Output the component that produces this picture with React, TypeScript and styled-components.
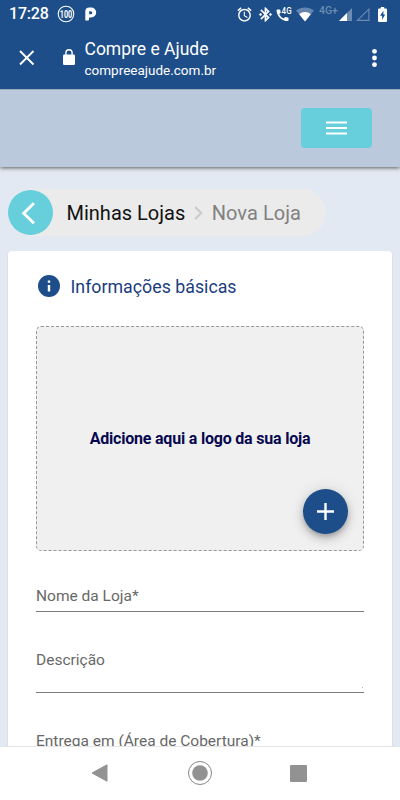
import React from 'react';
import styled, { createGlobalStyle } from 'styled-components';

const GlobalStyle = createGlobalStyle`
  * { box-sizing: border-box; }
  body { margin: 0; overflow: hidden; font-family: Roboto, sans-serif; }
  svg { display: block; flex: none; }
`;

const Screen = styled.div`
  width: 400px;
  height: 800px;
  display: flex;
  flex-direction: column;
  overflow: hidden;
  background: #e2e9f2;
`;

const BrowserChrome = styled.header`
  flex: none;
  height: 89px;
  background: #1d4e89;
  color: #fff;
`;

const StatusBar = styled.div`
  height: 28px;
  padding: 0 13px 0 9px;
  display: flex;
  align-items: center;
`;

const Clock = styled.span`
  width: 49px;
  font-size: 16px;
  font-weight: 500;
  line-height: 28px;
  letter-spacing: -0.2px;
`;

const StatusIcons = styled.div`
  margin-left: auto;
  display: flex;
  align-items: center;
`;

const StatusItem = styled.span<{ $gap?: number }>`
  display: block;
  margin-left: ${(p) => p.$gap ?? 0}px;
`;

const NetworkLabel = styled.span`
  margin: 0 1px 7px 5px;
  width: 19px;
  color: #6c8cb4;
  font-size: 10.5px;
  font-weight: 500;
  line-height: 10px;
  white-space: nowrap;
`;

const AddressBar = styled.div`
  height: 61px;
  padding: 0 23px 0 19px;
  display: flex;
  align-items: center;
`;

const IconNudge = styled.span`
  margin-bottom: 2px;
`;

const LockSlot = styled.span`
  margin: 0 0 3px 28px;
`;

const PageIdentity = styled.div`
  flex: 1;
  margin-left: 9.5px;
  padding-top: 1px;
`;

const PageTitle = styled.div`
  font-size: 17.5px;
  line-height: 22px;
`;

const PageHost = styled.div`
  font-size: 13.5px;
  line-height: 20px;
`;

const SiteBar = styled.div`
  flex: none;
  height: 78px;
  padding: 0 28px 2px;
  display: flex;
  align-items: center;
  justify-content: flex-end;
  background: #bbc9dc;
  border-top: 1px solid #9caabd;
  box-shadow: 0 1px 4px rgba(0, 0, 0, 0.6);
  clip-path: inset(0 0 -8px 0);
`;

const MenuButton = styled.button`
  width: 71px;
  height: 40px;
  padding: 1px 0 0;
  border: 0;
  border-radius: 4px;
  display: flex;
  align-items: center;
  justify-content: center;
  background: #67cfdc;
`;

const Content = styled.main`
  flex: 1;
  min-height: 0;
  overflow: hidden;
  padding: 22px 8px 0;
`;

const Breadcrumb = styled.nav`
  width: 318px;
  height: 47px;
  border-radius: 24px;
  display: flex;
  align-items: center;
  background: #ebebeb;
  font-size: 20px;
  line-height: 24px;
`;

const BackButton = styled.button`
  flex: none;
  width: 45px;
  height: 45px;
  margin-right: 13.5px;
  padding: 0 5px 0 0;
  border: 0;
  border-radius: 50%;
  display: flex;
  align-items: center;
  justify-content: center;
  background: #67cfdc;
`;

const Crumb = styled.span<{ $current?: boolean }>`
  color: ${(p) => (p.$current ? '#818181' : '#111')};
  letter-spacing: ${(p) => (p.$current ? 0.05 : 0)}px;
  white-space: nowrap;
`;

const CrumbDivider = styled.span`
  margin: 0 8.5px 0 9px;
`;

const Card = styled.section`
  margin-top: 15px;
  height: 600px;
  padding: 23px 28px 0;
  border-radius: 4px;
  background: #fff;
  box-shadow: 0 1px 2px rgba(0, 0, 0, 0.13);
`;

const CardHeading = styled.h2`
  margin: 0;
  height: 24px;
  padding-left: 2px;
  display: flex;
  align-items: center;
  gap: 10.5px;
  color: #1b3d7d;
  font-size: 17.8px;
  font-weight: 400;
`;

const LogoDrop = styled.div`
  position: relative;
  height: 225px;
  margin-top: 28px;
  border: 1px dashed #979797;
  border-radius: 5px;
  display: flex;
  align-items: center;
  justify-content: center;
  background: #f0f0f0;
  color: #06084f;
  font-size: 16px;
  font-weight: 700;
  letter-spacing: -0.2px;
`;

const AddButton = styled.button`
  position: absolute;
  right: 15px;
  bottom: 16px;
  width: 45px;
  height: 45px;
  padding: 0;
  border: 0;
  border-radius: 50%;
  display: flex;
  align-items: center;
  justify-content: center;
  background: #1d4e89;
  box-shadow: 0 3px 5px -1px rgba(0, 0, 0, 0.2), 0 5px 10px rgba(0, 0, 0, 0.16),
    0 1px 16px rgba(0, 0, 0, 0.12);
`;

const Field = styled.div<{ $top: number; $height: number }>`
  margin-top: ${(p) => p.$top}px;
  height: ${(p) => p.$height}px;
  display: flex;
  justify-content: space-between;
  border-bottom: 1px solid #7b7b7b;
`;

const FieldLabel = styled.label`
  color: #686868;
  font-size: 15.5px;
  line-height: 20px;
  white-space: nowrap;
`;

const ResizeGrip = styled.span`
  align-self: flex-end;
  width: 1px;
  height: 1px;
  margin: 0 1px 4px 0;
  background: #b5b5b5;
`;

const SystemNav = styled.footer`
  flex: none;
  height: 53px;
  padding: 0 93px 1px 91px;
  box-shadow: 0 -1px 0 #e6e6e6;
  display: flex;
  align-items: center;
  justify-content: space-between;
  background: #fff;
`;

const HundredIcon = () => (
  <svg width="18" height="18" viewBox="0 0 18 18">
    <circle cx="9" cy="9" r="7.8" fill="none" stroke="#fff" strokeWidth="1.1" />
    <text x="9" y="12.7" textAnchor="middle" fill="#fff" fontFamily="Roboto, sans-serif" fontSize="10.5" fontWeight="700" textLength="12.5" lengthAdjust="spacingAndGlyphs">100</text>
  </svg>
);

const ParkingIcon = () => (
  <svg width="12" height="14" viewBox="0 0 12 14">
    <path fillRule="evenodd" fill="#fff" d="M.3 13.5V4.5Q.3.5 4.3.5H6.2A5 5 0 0 1 6.2 10.5H4.6Q4 10.5 4 11.2V12.5Q4 13.5 3 13.500zM4.2 4.2V7.2H5.8A1.5 1.5 0 0 0 5.8 4.2z" />
  </svg>
);

const AlarmIcon = () => (
  <svg width="17" height="17" viewBox="0 0 24 24" fill="#fff">
    <path d="M22 5.72l-4.6-3.86-1.29 1.53 4.6 3.86L22 5.72zM7.88 3.39L6.6 1.86 2 5.71l1.29 1.53 4.59-3.85zM12.5 8H11v6l4.75 2.85.75-1.23-4-2.37V8zM12 4c-4.97 0-9 4.03-9 9s4.02 9 9 9c4.97 0 9-4.03 9-9s-4.03-9-9-9zm0 16c-3.87 0-7-3.13-7-7s3.13-7 7-7 7 3.13 7 7-3.13 7-7 7z" />
  </svg>
);

const BluetoothIcon = () => (
  <svg width="17" height="17" viewBox="0 0 24 24" fill="#fff" stroke="#fff" strokeWidth=".5">
    <path d="M7 12l-2-2-2 2 2 2 2-2zm10.71-4.29L12 2h-1v7.59L6.41 5 5 6.41 10.59 12 5 17.59 6.41 19 11 14.41V22h1l5.71-5.71-4.3-4.29 4.3-4.29zM13 5.83l1.88 1.88L13 9.59V5.83zm1.88 10.46L13 18.17v-3.76l1.88 1.88zM19 10l-2 2 2 2 2-2-2-2z" />
  </svg>
);

const CallIcon = () => (
  <svg width="16" height="16" viewBox="0 0 16 16">
    <path d="M3.2 8.3a9.5 9.5 0 0 0 4.3 4.3l1.4-1.4q.3-.3.8-.2 1 .4 2.1.4.7 0 .7.7v2.2q0 .8-.8.8A11.2 11.2 0 0 1 .5 4.3q0-.8.8-.8h2.3q.7 0 .7.8 0 1 .4 2.1.1.4-.2.7z" fill="#fff" />
    <text x="5.6" y="8.2" fill="#fff" fontFamily="Roboto, sans-serif" fontSize="8.5" fontWeight="500" textLength="10" lengthAdjust="spacingAndGlyphs">4G</text>
  </svg>
);

const WifiIcon = () => (
  <svg width="18" height="15" viewBox="0 0 18 15">
    <path d="M0 3.4C5.2-.5 12.8-.5 18 3.4L9 14.5z" fill="#6385b0" />
    <path d="M3.2 7.2C6.6 4.2 11.4 4.2 14.8 7.2L9 14.5z" fill="#fff" />
  </svg>
);

const SignalIcon = () => (
  <svg width="13" height="13" viewBox="0 0 13 13">
    <path d="M0 13L13 0V13z" fill="#6c8cb4" />
    <path d="M0 13L8 5V13z" fill="#fff" />
  </svg>
);

const EmptySignalIcon = () => (
  <svg width="14" height="13" viewBox="0 0 14 13">
    <path d="M1.4 12.4L12.9 1.2V12.4z" fill="none" stroke="#6c8cb4" strokeWidth="1.1" />
  </svg>
);

const BatteryIcon = () => (
  <svg width="9" height="15" viewBox="0 0 9 15">
    <path d="M2.8 0h3.4v1.5H8q1 0 1 1V14q0 1-1 1H1q-1 0-1-1V2.5q0-1 1-1h1.8z" fill="#fff" />
    <path d="M5.4 3.8L2 8.8H4.1V12.7L7.2 7.5H5.4z" fill="#1d4e89" />
  </svg>
);

const CloseIcon = () => (
  <svg width="16" height="16" viewBox="0 0 16 16">
    <path d="M1 1L14.5 14.5M14.5 1L1 14.5" stroke="#fff" strokeWidth="1.9" />
  </svg>
);

const LockIcon = () => (
  <svg width="12" height="16" viewBox="0 0 12 16">
    <rect x="0" y="5.5" width="12" height="10.5" rx="1.3" fill="#fff" />
    <path d="M2.9 6V3.8a3.1 3.1 0 0 1 6.2 0V6" fill="none" stroke="#fff" strokeWidth="1.4" />
  </svg>
);

const MoreIcon = () => (
  <svg width="5" height="20" viewBox="0 0 5 20" fill="#fff">
    <circle cx="2.5" cy="3.3" r="2.4" />
    <circle cx="2.5" cy="10" r="2.4" />
    <circle cx="2.5" cy="16.7" r="2.4" />
  </svg>
);

const MenuIcon = () => (
  <svg width="21" height="14" viewBox="0 0 21 14">
    <path d="M0 1.5H21M0 7H21M0 12.5H21" stroke="#fff" strokeWidth="2.2" />
  </svg>
);

const BackIcon = () => (
  <svg width="14" height="22" viewBox="0 0 14 22">
    <path d="M12.9 1.2L2.7 11.3L12.9 21.2" fill="none" stroke="#fff" strokeWidth="2.9" />
  </svg>
);

const CrumbChevron = () => (
  <svg width="9" height="14" viewBox="0 0 9 14">
    <path d="M1.2 1L7.2 7L1.2 13" fill="none" stroke="#cbcbcb" strokeWidth="2.2" />
  </svg>
);

const InfoIcon = () => (
  <svg width="22" height="22" viewBox="0 0 22 22">
    <circle cx="11" cy="11" r="11" fill="#1d4e89" />
    <path d="M11 5.5V7.7M11 9.9V16.5" stroke="#fff" strokeWidth="2.4" />
  </svg>
);

const PlusIcon = () => (
  <svg width="17" height="17" viewBox="0 0 17 17">
    <path d="M8.5 0V17M0 8.5H17" stroke="#fff" strokeWidth="2.4" />
  </svg>
);

const NavBackIcon = () => (
  <svg width="17" height="18" viewBox="0 0 17 18">
    <path d="M1 9L16 .8V17.2z" fill="#929292" stroke="#929292" strokeWidth="1" strokeLinejoin="round" />
  </svg>
);

const NavHomeIcon = () => (
  <svg width="26" height="26" viewBox="0 0 26 26">
    <circle cx="14" cy="13" r="11.5" fill="none" stroke="#858585" />
    <circle cx="14" cy="13" r="7.8" fill="#929292" />
  </svg>
);

const NavRecentIcon = () => (
  <svg width="17" height="17" viewBox="0 0 17 17">
    <rect width="17" height="17" rx="1" fill="#929292" />
  </svg>
);

export default function App() {
  return (
    <Screen>
      <GlobalStyle />
      <BrowserChrome>
        <StatusBar>
          <Clock>17:28</Clock>
          <StatusItem $gap={-1}><HundredIcon /></StatusItem>
          <StatusItem $gap={10}><ParkingIcon /></StatusItem>
          <StatusIcons>
            <StatusItem><AlarmIcon /></StatusItem>
            <StatusItem $gap={4}><BluetoothIcon /></StatusItem>
            <StatusItem $gap={2}><CallIcon /></StatusItem>
            <StatusItem $gap={4}><WifiIcon /></StatusItem>
            <NetworkLabel>4G+</NetworkLabel>
            <StatusItem><SignalIcon /></StatusItem>
            <StatusItem $gap={4}><EmptySignalIcon /></StatusItem>
            <StatusItem $gap={8}><BatteryIcon /></StatusItem>
          </StatusIcons>
        </StatusBar>
        <AddressBar>
          <IconNudge><CloseIcon /></IconNudge>
          <LockSlot><LockIcon /></LockSlot>
          <PageIdentity>
            <PageTitle>Compre e Ajude</PageTitle>
            <PageHost>compreeajude.com.br</PageHost>
          </PageIdentity>
          <IconNudge><MoreIcon /></IconNudge>
        </AddressBar>
      </BrowserChrome>
      <SiteBar>
        <MenuButton aria-label="Menu"><MenuIcon /></MenuButton>
      </SiteBar>
      <Content>
        <Breadcrumb>
          <BackButton aria-label="Voltar"><BackIcon /></BackButton>
          <Crumb>Minhas Lojas</Crumb>
          <CrumbDivider><CrumbChevron /></CrumbDivider>
          <Crumb $current>Nova Loja</Crumb>
        </Breadcrumb>
        <Card>
          <CardHeading><InfoIcon />Informações básicas</CardHeading>
          <LogoDrop>
            Adicione aqui a logo da sua loja
            <AddButton aria-label="Adicionar logo"><PlusIcon /></AddButton>
          </LogoDrop>
          <Field $top={35} $height={26}><FieldLabel>Nome da Loja*</FieldLabel></Field>
          <Field $top={38} $height={43}><FieldLabel>Descrição</FieldLabel><ResizeGrip /></Field>
          <Field $top={38} $height={43}><FieldLabel>Entrega em (Área de Cobertura)*</FieldLabel></Field>
        </Card>
      </Content>
      <SystemNav>
        <NavBackIcon />
        <NavHomeIcon />
        <NavRecentIcon />
      </SystemNav>
    </Screen>
  );
}
